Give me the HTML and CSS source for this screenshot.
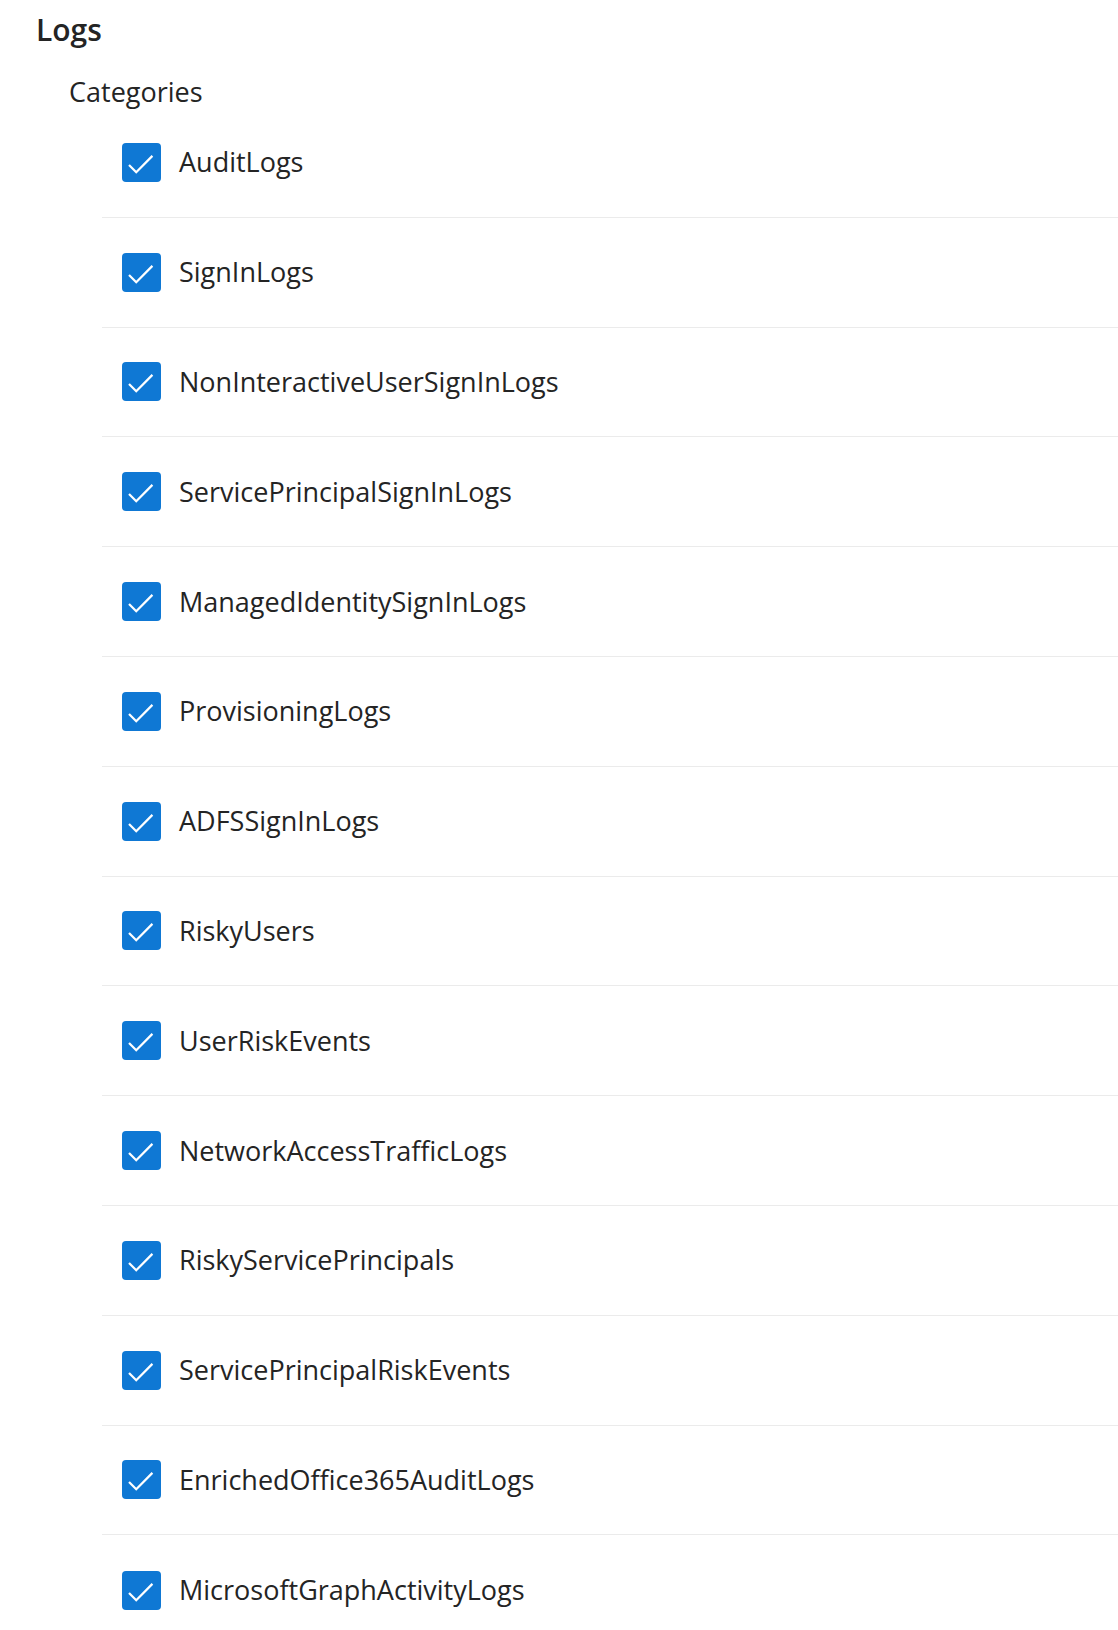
FILE: index.html
```html
<!DOCTYPE html>
<html lang="en">
<head>
    <meta charset="UTF-8">
    <title>Diagnostic setting - Logs</title>
    <link rel="stylesheet" href="styles.css">
</head>
<body>
    <div class="section">
        <h2 class="section-title">Logs</h2>
        <div class="group">
            <div class="group-title">Categories</div>
            <div class="category-list">
                <label class="category"><span class="checkbox"><svg viewBox="0 0 20 20"><path d="M3.6 11.3 L7.3 15 L15.6 6.6"/></svg></span><span class="category-name">AuditLogs</span></label>
                <label class="category"><span class="checkbox"><svg viewBox="0 0 20 20"><path d="M3.6 11.3 L7.3 15 L15.6 6.6"/></svg></span><span class="category-name">SignInLogs</span></label>
                <label class="category"><span class="checkbox"><svg viewBox="0 0 20 20"><path d="M3.6 11.3 L7.3 15 L15.6 6.6"/></svg></span><span class="category-name">NonInteractiveUserSignInLogs</span></label>
                <label class="category"><span class="checkbox"><svg viewBox="0 0 20 20"><path d="M3.6 11.3 L7.3 15 L15.6 6.6"/></svg></span><span class="category-name">ServicePrincipalSignInLogs</span></label>
                <label class="category"><span class="checkbox"><svg viewBox="0 0 20 20"><path d="M3.6 11.3 L7.3 15 L15.6 6.6"/></svg></span><span class="category-name">ManagedIdentitySignInLogs</span></label>
                <label class="category"><span class="checkbox"><svg viewBox="0 0 20 20"><path d="M3.6 11.3 L7.3 15 L15.6 6.6"/></svg></span><span class="category-name">ProvisioningLogs</span></label>
                <label class="category"><span class="checkbox"><svg viewBox="0 0 20 20"><path d="M3.6 11.3 L7.3 15 L15.6 6.6"/></svg></span><span class="category-name">ADFSSignInLogs</span></label>
                <label class="category"><span class="checkbox"><svg viewBox="0 0 20 20"><path d="M3.6 11.3 L7.3 15 L15.6 6.6"/></svg></span><span class="category-name">RiskyUsers</span></label>
                <label class="category"><span class="checkbox"><svg viewBox="0 0 20 20"><path d="M3.6 11.3 L7.3 15 L15.6 6.6"/></svg></span><span class="category-name">UserRiskEvents</span></label>
                <label class="category"><span class="checkbox"><svg viewBox="0 0 20 20"><path d="M3.6 11.3 L7.3 15 L15.6 6.6"/></svg></span><span class="category-name">NetworkAccessTrafficLogs</span></label>
                <label class="category"><span class="checkbox"><svg viewBox="0 0 20 20"><path d="M3.6 11.3 L7.3 15 L15.6 6.6"/></svg></span><span class="category-name">RiskyServicePrincipals</span></label>
                <label class="category"><span class="checkbox"><svg viewBox="0 0 20 20"><path d="M3.6 11.3 L7.3 15 L15.6 6.6"/></svg></span><span class="category-name">ServicePrincipalRiskEvents</span></label>
                <label class="category"><span class="checkbox"><svg viewBox="0 0 20 20"><path d="M3.6 11.3 L7.3 15 L15.6 6.6"/></svg></span><span class="category-name">EnrichedOffice365AuditLogs</span></label>
                <label class="category"><span class="checkbox"><svg viewBox="0 0 20 20"><path d="M3.6 11.3 L7.3 15 L15.6 6.6"/></svg></span><span class="category-name">MicrosoftGraphActivityLogs</span></label>
            </div>
        </div>
    </div>
</body>
</html>
```

FILE: styles.css
```css
body {
    font-family: 'Open Sans', 'Noto Sans', sans-serif;
    margin: 0;
    padding: 0;
    background: white;
    color: #242424;
}
.section {
    padding: 10px 0 0 36px;
}
.section-title {
    font-size: 30px;
    font-weight: 600;
    line-height: 40px;
    margin: 0;
}
.group {
    padding-left: 33px;
    margin-top: 24px;
}
.group-title {
    font-size: 27px;
    line-height: 36px;
    margin-bottom: -2px;
}
.category-list {
    margin-left: 33px;
}
.category {
    display: flex;
    align-items: center;
    gap: 18px;
    height: 109.8px;
    box-sizing: border-box;
    padding-left: 20px;
    border-bottom: 1px solid #ebebeb;
}
.category:last-child {
    border-bottom: none;
}
.checkbox {
    width: 39px;
    height: 39px;
    border-radius: 4px;
    background: #0f78d4;
    display: flex;
    flex-shrink: 0;
}
.checkbox svg {
    width: 39px;
    height: 39px;
    fill: none;
    stroke: white;
    stroke-width: 1.15;
}
.category-name {
    font-size: 27px;
    line-height: 36px;
}
```
